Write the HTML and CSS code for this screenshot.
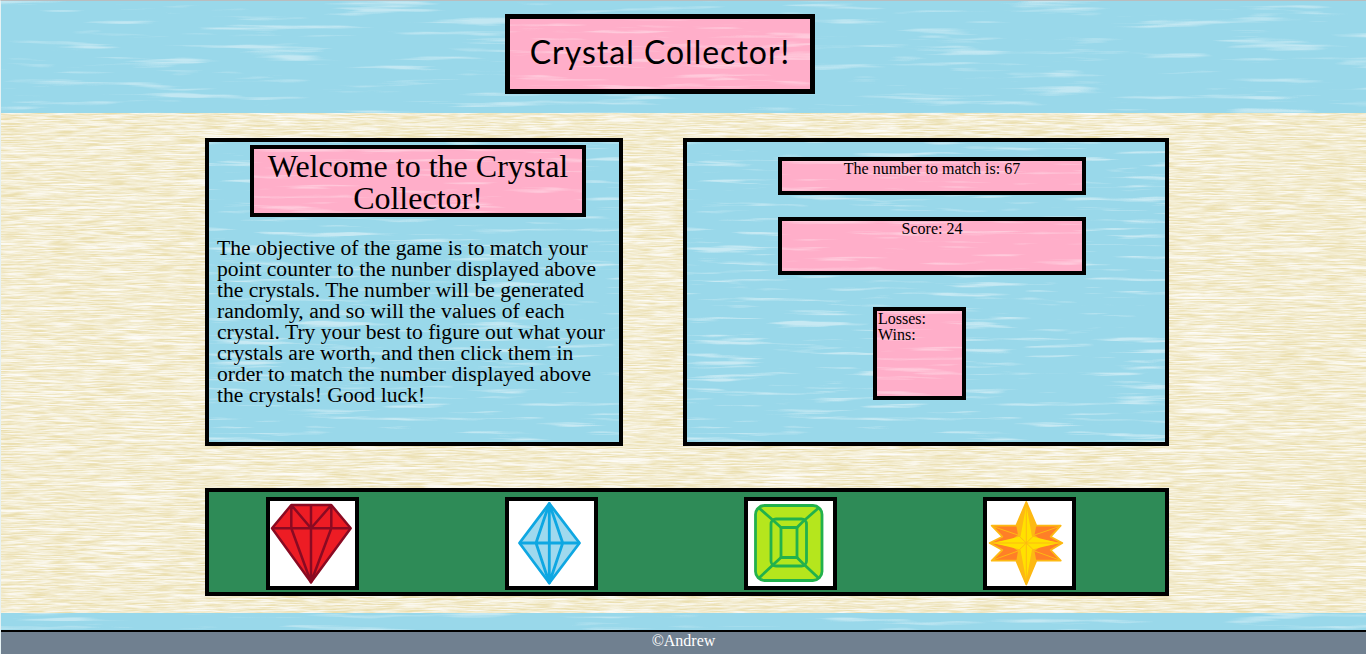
FILE: index.html
```html
<!DOCTYPE html>
<html lang="en">
<head>
<meta charset="utf-8">
<title>Crystal Collector!</title>
<link rel="stylesheet" href="styles.css">
</head>
<body>
<header class="top">
  <h1 class="title">Crystal Collector!</h1>
</header>
<main class="sand">
  <div class="board">
    <section class="panel intro">
      <h2 class="welcome">Welcome to the Crystal Collector!</h2>
      <p class="rules">The objective of the game is to match your point counter to the nunber displayed above the crystals. The number will be generated randomly, and so will the values of each crystal. Try your best to figure out what your crystals are worth, and then click them in order to match the number displayed above the crystals! Good luck!</p>
    </section>
    <section class="panel stats">
      <div class="readout target">The number to match is: 67</div>
      <div class="readout score">Score: 24</div>
      <div class="tally">Losses:<br>Wins:</div>
    </section>
    <section class="tray">
      <button class="crystal" type="button" aria-label="Red crystal">
        <svg class="gem" viewBox="8 7 85 85">
          <g fill="#ed1c24" stroke="#8a0a22" stroke-width="2.500" stroke-linejoin="round">
            <path d="M29.300 11H69.300L88.700 34.300 49 88.300 10 34.300Z"/>
            <path fill="none" d="M10 34.300H88.700M49 11V88.300M29.300 11V34.300M69.300 11V34.300M29.300 11 49 34.300 69.300 11M29.300 34.300 49 88.300 69.300 34.300"/>
          </g>
        </svg>
      </button>
      <button class="crystal" type="button" aria-label="Blue crystal">
        <svg class="gem" viewBox="8 7 85 85">
          <g fill="#9fd9ee" stroke="#0ea7e2" stroke-width="2.800" stroke-linejoin="round">
            <path d="M48.300 9.500 78.500 49 48.300 89 18.500 49Z"/>
            <path fill="none" d="M18.500 49H78.500M48.300 9.500V89M48.300 9.500 35 49 48.300 89 61.700 49Z"/>
          </g>
        </svg>
      </button>
      <button class="crystal" type="button" aria-label="Green crystal">
        <svg class="gem" viewBox="8 7 85 85">
          <g fill="#b5e61d" stroke="#22b14c" stroke-width="2.800" stroke-linejoin="round">
            <rect x="15.500" y="11.500" width="66.500" height="75" rx="9"/>
            <rect x="31" y="25" width="35.500" height="47" rx="5" fill="none"/>
            <rect x="41" y="33.500" width="16" height="30" fill="none"/>
            <path fill="none" d="M19 14 35 28M78.500 14 62.500 28M19 84 35 69M78.500 84 62.500 69M35 28 41 33.500M62.500 28 57 33.500M35 69 41 63.500M62.500 69 57 63.500"/>
          </g>
        </svg>
      </button>
      <button class="crystal" type="button" aria-label="Yellow crystal">
        <svg class="gem" viewBox="8 7 85 85">
          <g stroke="#fdb913" stroke-linejoin="round">
            <path fill="#ff7f27" stroke-width="1.800" d="M47.300 8 57.300 31.700H81.700L71.700 42.700 83.300 49 71.700 56 81.700 66.700H57.300L47.300 90.500 37.300 66.700H12.700L23.300 56 10.700 49 23.300 42.700 12.700 31.700H37.300Z"/>
            <path fill="#fdb913" stroke="none" d="M47.300 8 57.300 31.700 55.500 41 62 45.500 83.300 49 62 52.500 55.500 57 57.300 66.700 47.300 90.500 37.300 66.700 39 57 32.500 52.500 10.700 49 32.500 45.500 39 41 37.300 31.700Z"/>
            <path fill="#ffe100" stroke="none" d="M47.300 11 53 42.500 80 49 53 55.500 47.300 87 41.500 55.500 14 49 41.500 42.500Z"/>
            <path fill="none" stroke-width="1" d="M47.300 8V90.500M10.700 49H83.300M14 32.500 39 41 47.300 49 55.500 41 80.500 32.500M14 66 39 57 47.300 49 55.500 57 80.500 66"/>
          </g>
        </svg>
      </button>
    </section>
  </div>
</main>
<footer class="foot">©Andrew</footer>
</body>
</html>
```

FILE: styles.css
```css
* {
  box-sizing: border-box;
}

html,
body {
  height: 654px;
  margin: 0;
  overflow: hidden;
}

body {
  display: flex;
  flex-direction: column;
  border-top: 1px solid #b9bdbf;
  border-left: 1px solid #e6f2f4;
  background-color: #99d8ea;
  background-image: url("data:image/svg+xml,%3Csvg xmlns='http://www.w3.org/2000/svg' width='1366' height='654'%3E%3Cfilter id='f' x='0' y='0' width='100%25' height='100%25' color-interpolation-filters='sRGB'%3E%3CfeTurbulence type='fractalNoise' baseFrequency='.009 .16' numOctaves='3' seed='4'/%3E%3CfeColorMatrix values='0 0 0 0 1 0 0 0 0 1 0 0 0 0 1 5 0 0 0 -2.900'/%3E%3C/filter%3E%3Crect width='100%25' height='100%25' opacity='.4' filter='url(%23f)'/%3E%3C/svg%3E");
  font-family: "Liberation Serif", "Times New Roman", serif;
  font-size: 16px;
  line-height: 1;
  color: #000;
}

.top {
  height: 112px;
  padding: 13px 0 0 504px;
}

.title {
  display: flex;
  align-items: center;
  justify-content: center;
  width: 310px;
  height: 80px;
  margin: 0;
  padding-bottom: 5px;
  border: 5px solid #000;
  background-color: #ffaec9;
  background-image: url("data:image/svg+xml,%3Csvg xmlns='http://www.w3.org/2000/svg' width='500' height='200'%3E%3Cfilter id='f' x='0' y='0' width='100%25' height='100%25' color-interpolation-filters='sRGB'%3E%3CfeTurbulence type='fractalNoise' baseFrequency='.012 .2' numOctaves='3' seed='9'/%3E%3CfeColorMatrix values='0 0 0 0 1 0 0 0 0 1 0 0 0 0 1 5 0 0 0 -2.900'/%3E%3C/filter%3E%3Crect width='100%25' height='100%25' opacity='.35' filter='url(%23f)'/%3E%3C/svg%3E");
  font-family: Lato, "Noto Sans", sans-serif;
  font-size: 32px;
  font-weight: 400;
  letter-spacing: 1px;
}

.sand {
  height: 500px;
  padding: 25px 0 0 204px;
  background-color: #ebdfb0;
  background-image:
    url("data:image/svg+xml,%3Csvg xmlns='http://www.w3.org/2000/svg' width='1366' height='500'%3E%3Cfilter id='f' x='0' y='0' width='100%25' height='100%25' color-interpolation-filters='sRGB'%3E%3CfeTurbulence type='fractalNoise' baseFrequency='.012 .3' numOctaves='3' seed='31'/%3E%3CfeColorMatrix values='0 0 0 0 1 0 0 0 0 1 0 0 0 0 1 7 0 0 0 -4.300'/%3E%3C/filter%3E%3Crect width='100%25' height='100%25' opacity='.7' filter='url(%23f)'/%3E%3C/svg%3E"),
    url("data:image/svg+xml,%3Csvg xmlns='http://www.w3.org/2000/svg' width='1366' height='500'%3E%3Cfilter id='f' x='0' y='0' width='100%25' height='100%25' color-interpolation-filters='sRGB'%3E%3CfeTurbulence type='fractalNoise' baseFrequency='.04 .8' numOctaves='3' seed='12'/%3E%3CfeColorMatrix values='0 0 0 0 1 0 0 0 0 1 0 0 0 0 1 2 0 0 0 -.500'/%3E%3C/filter%3E%3Crect width='100%25' height='100%25' opacity='.8' filter='url(%23f)'/%3E%3C/svg%3E");
}

.board {
  display: grid;
  grid-template-columns: 418px 486px;
  grid-template-rows: 308px 108px;
  column-gap: 60px;
  row-gap: 42px;
  width: 964px;
}

.panel {
  border: 4px solid #000;
  background-color: #99d8ea;
  background-image: url("data:image/svg+xml,%3Csvg xmlns='http://www.w3.org/2000/svg' width='500' height='310'%3E%3Cfilter id='f' x='0' y='0' width='100%25' height='100%25' color-interpolation-filters='sRGB'%3E%3CfeTurbulence type='fractalNoise' baseFrequency='.012 .2' numOctaves='3' seed='21'/%3E%3CfeColorMatrix values='0 0 0 0 1 0 0 0 0 1 0 0 0 0 1 5 0 0 0 -2.900'/%3E%3C/filter%3E%3Crect width='100%25' height='100%25' opacity='.45' filter='url(%23f)'/%3E%3C/svg%3E");
}

.intro {
  padding: 3px 12px 0 8px;
}

.welcome,
.readout,
.tally {
  background-color: #ffaec9;
  background-image: url("data:image/svg+xml,%3Csvg xmlns='http://www.w3.org/2000/svg' width='340' height='100'%3E%3Cfilter id='f' x='0' y='0' width='100%25' height='100%25' color-interpolation-filters='sRGB'%3E%3CfeTurbulence type='fractalNoise' baseFrequency='.012 .2' numOctaves='3' seed='5'/%3E%3CfeColorMatrix values='0 0 0 0 1 0 0 0 0 1 0 0 0 0 1 5 0 0 0 -2.900'/%3E%3C/filter%3E%3Crect width='100%25' height='100%25' opacity='.35' filter='url(%23f)'/%3E%3C/svg%3E");
  border: 4px solid #000;
}

.welcome {
  width: 336px;
  height: 72px;
  margin: 0 0 21px 33px;
  padding-top: 1px;
  font-size: 32px;
  font-weight: 400;
  text-align: center;
}

.rules {
  margin: 0;
  font-size: 21.600px;
  line-height: 21px;
}

.stats {
  display: flex;
  flex-direction: column;
  align-items: flex-start;
  padding-top: 15px;
}

.readout {
  width: 308px;
  margin-left: 91px;
  text-align: center;
}

.target {
  height: 38px;
  margin-bottom: 22px;
}

.score {
  height: 58px;
  margin-bottom: 32px;
}

.tally {
  width: 93px;
  height: 93px;
  margin-left: 186px;
  padding-left: 1px;
}

.tray {
  grid-column: 1 / -1;
  display: flex;
  gap: 146px;
  padding: 5px 0 0 57px;
  border: 4px solid #000;
  background-color: #2e8b57;
}

.crystal {
  width: 93px;
  height: 93px;
  padding: 0;
  border: 4px solid #000;
  background: #fff;
  cursor: pointer;
}

.gem {
  display: block;
  width: 85px;
  height: 85px;
}

.foot {
  height: 24px;
  margin-top: 17px;
  padding-top: 1px;
  border-top: 2px solid #000;
  background: #708090;
  color: #fff;
  text-align: center;
}
```
